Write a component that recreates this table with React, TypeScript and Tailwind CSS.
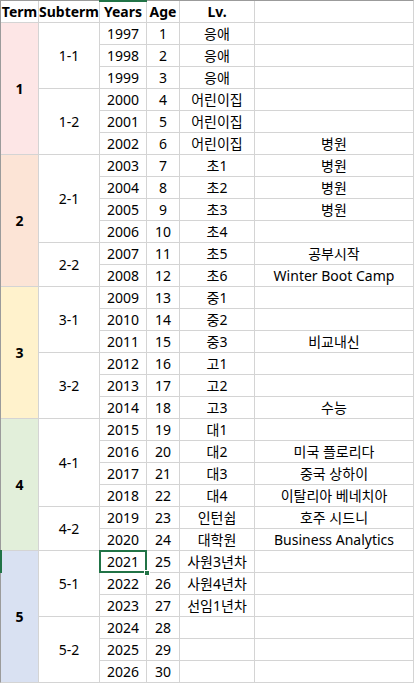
import React from "react";

interface Row {
  year: number;
  age: number;
  lv: string;
  note?: string;
}

interface Subterm {
  label: string;
  rows: Row[];
}

interface Term {
  id: string;
  bg: string;
  subterms: Subterm[];
}

const terms: Term[] = [
  {
    id: "1",
    bg: "bg-[#fde6e6]",
    subterms: [
      {
        label: "1-1",
        rows: [
          { year: 1997, age: 1, lv: "응애" },
          { year: 1998, age: 2, lv: "응애" },
          { year: 1999, age: 3, lv: "응애" },
        ],
      },
      {
        label: "1-2",
        rows: [
          { year: 2000, age: 4, lv: "어린이집" },
          { year: 2001, age: 5, lv: "어린이집" },
          { year: 2002, age: 6, lv: "어린이집", note: "병원" },
        ],
      },
    ],
  },
  {
    id: "2",
    bg: "bg-[#fce4d6]",
    subterms: [
      {
        label: "2-1",
        rows: [
          { year: 2003, age: 7, lv: "초1", note: "병원" },
          { year: 2004, age: 8, lv: "초2", note: "병원" },
          { year: 2005, age: 9, lv: "초3", note: "병원" },
          { year: 2006, age: 10, lv: "초4" },
        ],
      },
      {
        label: "2-2",
        rows: [
          { year: 2007, age: 11, lv: "초5", note: "공부시작" },
          { year: 2008, age: 12, lv: "초6", note: "Winter Boot Camp" },
        ],
      },
    ],
  },
  {
    id: "3",
    bg: "bg-[#fff2cc]",
    subterms: [
      {
        label: "3-1",
        rows: [
          { year: 2009, age: 13, lv: "중1" },
          { year: 2010, age: 14, lv: "중2" },
          { year: 2011, age: 15, lv: "중3", note: "비교내신" },
        ],
      },
      {
        label: "3-2",
        rows: [
          { year: 2012, age: 16, lv: "고1" },
          { year: 2013, age: 17, lv: "고2" },
          { year: 2014, age: 18, lv: "고3", note: "수능" },
        ],
      },
    ],
  },
  {
    id: "4",
    bg: "bg-[#e2efda]",
    subterms: [
      {
        label: "4-1",
        rows: [
          { year: 2015, age: 19, lv: "대1" },
          { year: 2016, age: 20, lv: "대2", note: "미국 플로리다" },
          { year: 2017, age: 21, lv: "대3", note: "중국 상하이" },
          { year: 2018, age: 22, lv: "대4", note: "이탈리아 베네치아" },
        ],
      },
      {
        label: "4-2",
        rows: [
          { year: 2019, age: 23, lv: "인턴쉽", note: "호주 시드니" },
          { year: 2020, age: 24, lv: "대학원", note: "Business Analytics" },
        ],
      },
    ],
  },
  {
    id: "5",
    bg: "bg-[#d9e1f2]",
    subterms: [
      {
        label: "5-1",
        rows: [
          { year: 2021, age: 25, lv: "사원3년차" },
          { year: 2022, age: 26, lv: "사원4년차" },
          { year: 2023, age: 27, lv: "선임1년차" },
        ],
      },
      {
        label: "5-2",
        rows: [
          { year: 2024, age: 28, lv: "" },
          { year: 2025, age: 29, lv: "" },
          { year: 2026, age: 30, lv: "" },
        ],
      },
    ],
  },
];

const spanClass: Record<number, string> = {
  2: "row-span-2",
  3: "row-span-3",
  4: "row-span-4",
  6: "row-span-6",
};

const cell = "bg-white flex items-center justify-center whitespace-nowrap";

const App = () => {
  const cells: React.ReactNode[] = [];

  terms.forEach((term) => {
    const termRows = term.subterms.reduce((n, s) => n + s.rows.length, 0);
    term.subterms.forEach((sub, si) => {
      sub.rows.forEach((row, ri) => {
        if (si === 0 && ri === 0) {
          cells.push(
            <div
              key={`t${term.id}`}
              className={`col-start-1 ${spanClass[termRows]} ${term.bg} flex items-center justify-center font-bold`}
            >
              {term.id}
            </div>
          );
        }
        if (ri === 0) {
          cells.push(
            <div
              key={`s${sub.label}`}
              className={`col-start-2 ${spanClass[sub.rows.length]} ${cell}`}
            >
              {sub.label}
            </div>
          );
        }
        const selected = row.year === 2021;
        cells.push(
          <div key={`y${row.year}`} className={`col-start-3 relative ${cell}`}>
            {row.year}
            {selected && (
              <>
                <div className="absolute -inset-px border-2 border-[#217346] z-10"></div>
                <div className="absolute right-[-4px] bottom-[-4px] w-[6px] h-[6px] bg-[#217346] border border-white z-20"></div>
              </>
            )}
          </div>
        );
        cells.push(
          <div key={`a${row.year}`} className={cell}>
            {row.age}
          </div>
        );
        cells.push(
          <div key={`l${row.year}`} className={cell}>
            {row.lv}
          </div>
        );
        cells.push(
          <div key={`n${row.year}`} className={cell}>
            {row.note}
          </div>
        );
      });
    });
  });

  return (
    <div
      className="w-[414px] h-[685px] bg-white overflow-hidden relative text-[14px] leading-none text-black"
      style={{ fontFamily: '"Noto Sans", "Noto Sans CJK KR", sans-serif' }}
    >
      <div className="grid grid-cols-[37px_60px_46px_32px_74px_158px] auto-rows-[21px] gap-px bg-[#d4d4d4] border-t border-l border-t-[#9b9b9b] border-l-[#9b9b9b] border-r border-b border-[#d4d4d4] w-[414px]">
        <div className={`${cell} font-bold`}>Term</div>
        <div className={`${cell} font-bold`}>Subterm</div>
        <div className={`${cell} font-bold relative`}>
          Years
          <div className="absolute left-[-1px] right-[-1px] top-[-1px] h-[2px] bg-[#217346]"></div>
        </div>
        <div className={`${cell} font-bold`}>Age</div>
        <div className={`${cell} font-bold`}>Lv.</div>
        <div className={cell}></div>
        {cells}
      </div>
      <div className="absolute left-0 top-[550px] w-[2px] h-[23px] bg-[#217346]"></div>
    </div>
  );
};

export default App;
